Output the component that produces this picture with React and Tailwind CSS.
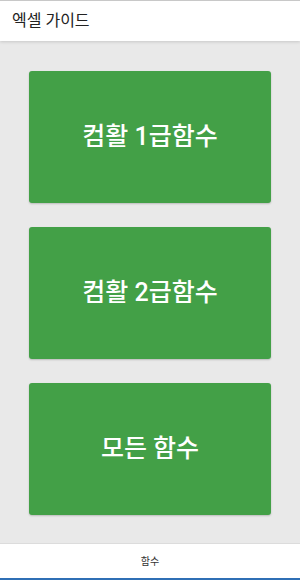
import React from 'react'

const items = ['컴활 1급함수', '컴활 2급함수', '모든 함수']

const App = () => {
  return (
    <div
      className="w-[300px] h-[580px] flex flex-col bg-[#e9e9e9] overflow-hidden"
      style={{ fontFamily: 'Roboto, "Noto Sans CJK KR", sans-serif' }}
    >
      {/* Header */}
      <div className="h-[41px] shrink-0 bg-white border-t border-[#c8c8c8] shadow-[0_1px_3px_rgba(0,0,0,0.15)] flex items-center px-3 z-10">
        <span className="text-[16px] text-[#222]">엑셀 가이드</span>
      </div>

      {/* Cards */}
      <div className="flex-1 flex flex-col gap-[24px] px-[29px] pt-[30px]">
        {items.map((label) => (
          <button
            key={label}
            className="h-[132px] shrink-0 rounded-[3px] bg-[#43a047] text-white text-[25px] font-medium flex items-center justify-center shadow-[0_1px_2px_rgba(0,0,0,0.2)]"
          >
            {label}
          </button>
        ))}
      </div>

      {/* Bottom tab */}
      <div className="h-[37px] shrink-0 bg-white border-t border-[#dcdcdc] border-b-2 border-b-[#2f6fb5] flex items-center justify-center">
        <span className="text-[10px] text-[#333]">함수</span>
      </div>
    </div>
  )
}

export default App
